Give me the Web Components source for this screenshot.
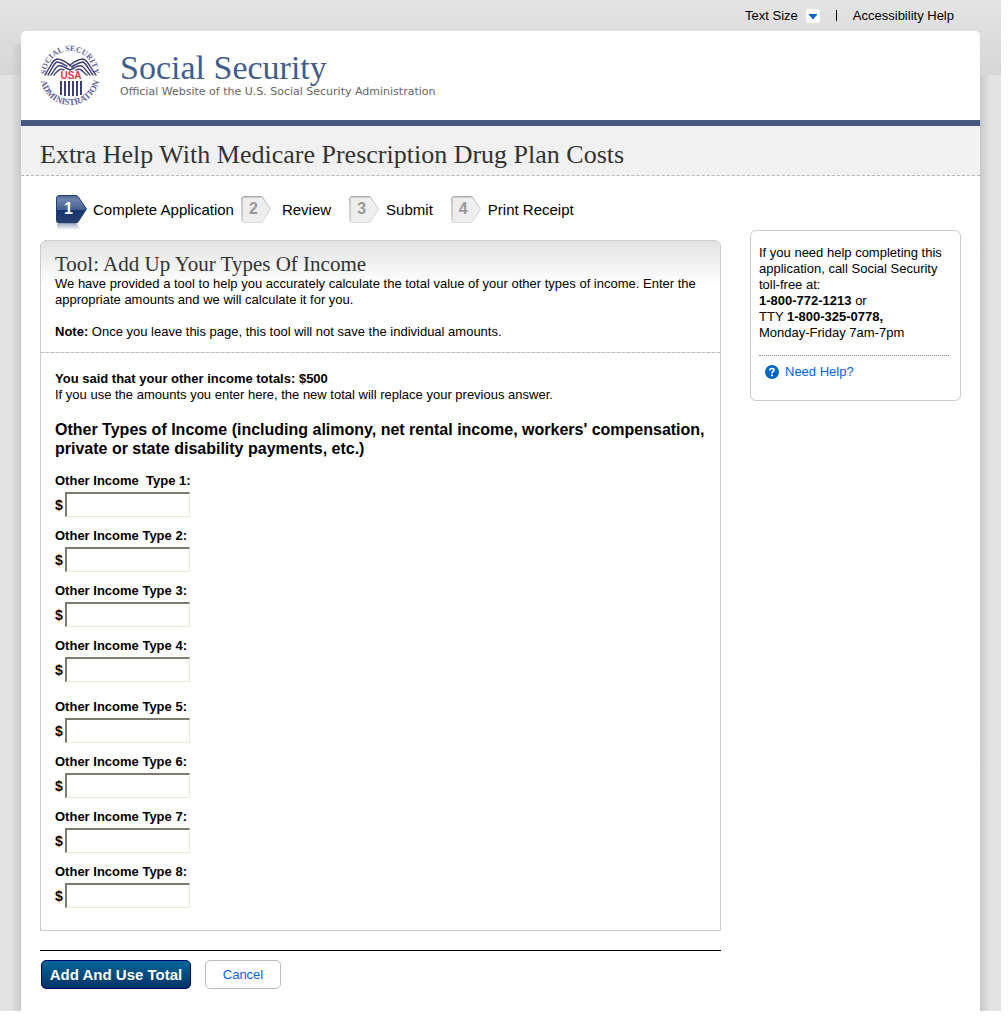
<!DOCTYPE html>
<html lang="en">
<head>
<meta charset="utf-8">
<title>Extra Help With Medicare Prescription Drug Plan Costs</title>
<style>
  body { margin: 0; background: #fff; color: #000; font: 13px/16px "Liberation Sans", Arial, sans-serif; }
</style>
</head>
<body>
<ssa-page>
  <ssa-utility slot="utility"></ssa-utility>
  <ssa-masthead></ssa-masthead>
  <ssa-title>Extra Help With Medicare Prescription Drug Plan Costs</ssa-title>
  <ssa-columns>
    <ssa-steps>
      <ssa-step number="1" current>Complete Application</ssa-step>
      <ssa-step number="2" class="wide">Review</ssa-step>
      <ssa-step number="3">Submit</ssa-step>
      <ssa-step number="4">Print Receipt</ssa-step>
    </ssa-steps>
    <ssa-income-tool></ssa-income-tool>
    <ssa-actions></ssa-actions>
    <ssa-help slot="side"></ssa-help>
  </ssa-columns>
</ssa-page>

<script>
function define(name, html) {
  const template = document.createElement('template');
  template.innerHTML = html;
  customElements.define(name, class extends HTMLElement {
    constructor() {
      super();
      this.attachShadow({ mode: 'open' }).append(template.content.cloneNode(true));
    }
  });
}

define('ssa-page', `
  <style>
    :host { display: block; margin: 0 7px 7px 0; background: linear-gradient(#e4e4e4, #d6d6d6) 0 0 / 100% 75px no-repeat #e3e3e3; }
    .frame { padding: 0 11px; }
    .edges { display: grid; grid-template-columns: 10px 1fr 10px; }
    .edge { margin-top: 44px; background: linear-gradient(to left, #e3e3e300, #c8c8c8); }
    .left { margin-top: 13px; background: linear-gradient(to right, #e3e3e300, #c8c8c8); }
    main { background: #fff; border-radius: 5px 5px 0 0; overflow: hidden; }
  </style>
  <div class="frame">
    <slot name="utility"></slot>
    <div class="edges"><div class="edge left"></div><main><slot></slot></main><div class="edge"></div></div>
  </div>`);

define('ssa-utility', `
  <style>
    :host { display: flex; height: 31px; align-items: center; justify-content: flex-end; padding-right: 36px; }
    button { display: flex; align-items: center; gap: 8px; padding: 0; border: 0; background: none; color: inherit; font: inherit; }
    a { color: inherit; text-decoration: none; }
    .bar { width: 1px; height: 11px; margin: 0 16px; background: #000; }
  </style>
  <button type="button">Text Size
    <svg width="14" height="14" viewBox="0 0 14 14" aria-hidden="true"><rect width="14" height="14" rx="3" fill="#fff"/><path d="M3 5h8v1l-3 3v1H6V9L3 6z" fill="#06c"/></svg>
  </button>
  <span class="bar"></span>
  <a href="#help">Accessibility Help</a>`);

define('ssa-seal', `
  <style>:host { display: block; width: 62px; height: 62px; } svg { display: block; overflow: visible; }</style>
  <svg width="62" height="62" viewBox="0 0 62 62" role="img" aria-label="Social Security Administration seal">
    <defs>
      <path id="top" d="M7 31A24 24 0 1 1 55 31"/>
      <path id="low" d="M1 31A30 30 0 0 0 61 31"/>
    </defs>
    <g fill="#66659a" font-family="Liberation Serif, serif" font-weight="bold" text-anchor="middle">
      <text font-size="8"><textPath href="#top" startOffset="50%">SOCIAL SECURITY</textPath></text>
      <text font-size="9"><textPath href="#low" startOffset="50%">ADMINISTRATION</textPath></text>
    </g>
    <g fill="none" stroke="#3d3d78" stroke-width="1.400" stroke-linecap="round">
      <path d="M31 21c-4-3-8-6-13-6-5 1-6 7-12 16"/>
      <path d="M28 22c-4-2-7-4-10-4-4 2-5 7-9 13"/>
      <path d="M27 24c-3-2-5-3-8-2-3 2-4 5-7 9"/>
      <path d="M25 26c-2-1-4-1-5 0-2 1-3 3-5 5"/>
      <path d="M31 21c4-3 8-6 13-6 5 1 6 7 13 16"/>
      <path d="M34 22c4-2 7-4 10-4 4 2 5 7 10 13"/>
      <path d="M35 24c3-2 5-3 8-2 3 2 4 5 8 9"/>
      <path d="M37 26c2-1 4-1 5 0 2 1 3 3 6 5"/>
      <path d="M29 20l4 3 2-2M27 24l4 2 4-2"/>
    </g>
    <path d="M22 37v14M26 37v15M30 37v15M34 37v15M38 37v15M42 37v14" stroke="#3d3d78" stroke-width="2"/>
    <text x="32" y="35" text-anchor="middle" fill="#e0393f" font-family="Liberation Sans, sans-serif" font-size="10" font-weight="bold">USA</text>
  </svg>`);

define('ssa-masthead', `
  <style>
    :host { display: flex; align-items: flex-start; gap: 19px; height: 76px; padding: 13px 18px 0; border-bottom: 6px solid #48597f; }
    .name { color: #425d8c; font: 34px/38px "Liberation Serif", serif; padding-top: 5px; }
    .tag { color: #666; font: 11px/14px "DejaVu Sans", sans-serif; margin-top: -2px; }
    p { margin: 0; }
  </style>
  <ssa-seal></ssa-seal>
  <div><p class="name">Social Security</p><p class="tag">Official Website of the U.S. Social Security Administration</p></div>`);

define('ssa-title', `
  <style>
    :host { display: block; background: #f1f1f1; border-bottom: 1px dashed #bbb; padding: 14px 19px 5px; }
    h1 { margin: 0; color: #333; font: 26px/30px "Liberation Serif", serif; }
  </style>
  <h1><slot></slot></h1>`);

define('ssa-columns', `
  <style>
    :host { display: grid; grid-template-columns: 1fr 211px; gap: 29px; align-items: start; padding: 0 19px 22px; }
    aside { padding-top: 54px; }
  </style>
  <div><slot></slot></div><aside><slot name="side"></slot></aside>`);

define('ssa-steps', `
  <style>
    :host { display: flex; gap: 18px; height: 45px; padding: 19px 0 0 16px; font-size: 15px; }
    ::slotted([current]) { margin-right: -11px; }
  </style>
  <slot></slot>`);

customElements.define('ssa-step', class extends HTMLElement {
  connectedCallback() {
    const current = this.hasAttribute('current');
    this.attachShadow({ mode: 'open' }).innerHTML = `
      <style>
        :host { display: flex; align-items: flex-start; gap: 7px; white-space: nowrap; }
        :host(.wide) { gap: 11px; }
        .marker { display: grid; width: 30px; }
        .marker > * { grid-area: 1 / 1; }
        b { width: 25px; text-align: center; font-size: 16px; line-height: 28px; color: ${current ? '#fff' : '#999'}; }
        .label { line-height: 30px; }
      </style>
      <span class="marker">
        <svg width="31" height="36" viewBox="0 0 31 36" aria-hidden="true">
          <defs>
            <linearGradient id="blue" x2="0" y2="1"><stop stop-color="#4b6796"/><stop offset=".15" stop-color="#6d82a9"/><stop offset=".52" stop-color="#435f90"/><stop offset=".54" stop-color="#15366c"/><stop offset="1" stop-color="#2a4170"/></linearGradient>
            <linearGradient id="fade" x2="0" y2="1"><stop stop-color="#a9b4c8"/><stop offset="1" stop-color="#fff"/></linearGradient>
            <linearGradient id="grey" x2="0" y2="1"><stop stop-color="#aaa"/><stop offset=".3" stop-color="#ccc"/><stop offset="1" stop-color="#ddd"/></linearGradient>
          </defs>
          ${current
            ? '<path d="M1 29h20l4 6H1z" fill="url(#fade)"/><path d="M3 .5h17q1 0 2 1l8.500 12.500L22 27q-1 1-2 1H3q-2.500 0-2.500-2.500v-22Q.5.5 3 .5z" fill="url(#blue)" stroke="#203e70"/>'
            : '<path d="M3 1.500h18l8.500 12.500L21 27.500H3q-2.500 0-2.500-2.500V4Q.5 1.500 3 1.500z" fill="#eee" stroke="url(#grey)"/><path d="M1.500 26V4q0-1.500 1.500-1.500h17" fill="none" stroke="#ccc"/>'}
        </svg>
        <b>${this.getAttribute('number')}</b>
      </span>
      <span class="label"><slot></slot></span>`;
  }
});

customElements.define('ssa-amount', class extends HTMLElement {
  connectedCallback() {
    this.attachShadow({ mode: 'open' }).innerHTML = `
      <style>
        :host { display: block; font-weight: bold; }
        label { display: block; white-space: pre; }
        .row { display: flex; align-items: center; gap: 2px; margin-top: 3px; }
        .sign { width: 8px; font-size: 14px; }
        input { box-sizing: border-box; width: 125px; height: 25px; margin: 0; padding: 2px 4px; background: #fff; border: solid; border-width: 2px 1px 1px 2px; border-color: #7d7a70 #ece9d8 #ece9d8 #7d7a70; font: inherit; }
      </style>
      <label for="amount">${this.getAttribute('label')}</label>
      <div class="row"><span class="sign">$</span><input id="amount" type="text"></div>`;
  }
});

define('ssa-income-tool', `
  <style>
    :host { display: block; border: 1px solid #ccc; border-radius: 6px 6px 0 0; overflow: hidden; }
    h2, h3, p { margin: 0; }
    header { padding: 11px 14px 12px; border-bottom: 1px dashed #bbb; background: linear-gradient(#e2e2e2, #fff 44px); }
    h2 { color: #333; font: 21px/24px "Liberation Serif", serif; }
    .note { margin-top: 16px; }
    section { padding: 18px 14px 22px; }
    h3 { margin: 17px 0 15px; font-size: 16px; line-height: 19px; }
    .group { display: grid; gap: 11px; }
    .group + .group { margin-top: 17px; }
  </style>
  <header>
    <h2>Tool: Add Up Your Types Of Income</h2>
    <p>We have provided a tool to help you accurately calculate the total value of your other types of income. Enter the appropriate amounts and we will calculate it for you.</p>
    <p class="note"><b>Note:</b> Once you leave this page, this tool will not save the individual amounts.</p>
  </header>
  <section>
    <p><b>You said that your other income totals: $500</b></p>
    <p>If you use the amounts you enter here, the new total will replace your previous answer.</p>
    <h3>Other Types of Income (including alimony, net rental income, workers' compensation, private or state disability payments, etc.)</h3>
    <div class="group">
      <ssa-amount label="Other Income  Type 1:"></ssa-amount>
      <ssa-amount label="Other Income Type 2:"></ssa-amount>
      <ssa-amount label="Other Income Type 3:"></ssa-amount>
      <ssa-amount label="Other Income Type 4:"></ssa-amount>
    </div>
    <div class="group">
      <ssa-amount label="Other Income Type 5:"></ssa-amount>
      <ssa-amount label="Other Income Type 6:"></ssa-amount>
      <ssa-amount label="Other Income Type 7:"></ssa-amount>
      <ssa-amount label="Other Income Type 8:"></ssa-amount>
    </div>
  </section>`);

define('ssa-actions', `
  <style>
    :host { display: flex; gap: 14px; margin-top: 19px; padding: 9px 1px 0; border-top: 1px solid #000; }
    button { height: 29px; padding: 0; border-radius: 5px; white-space: nowrap; }
    .primary { width: 150px; border: 1px solid #006; background: linear-gradient(#069, #036); color: #fff; font: bold 15px/20px "Liberation Sans", Arial, sans-serif; }
    .plain { width: 76px; border: 1px solid #bbb; background: #fff; color: #06d; font: inherit; }
  </style>
  <button type="button" class="primary">Add And Use Total</button>
  <button type="button" class="plain">Cancel</button>`);

define('ssa-help', `
  <style>
    :host { display: block; border: 1px solid #ccc; border-radius: 6px; padding: 14px 8px 20px; }
    p { margin: 0; }
    .link { display: flex; align-items: center; gap: 6px; margin: 14px 3px 0 0; padding: 8px 0 0 6px; border-top: 1px dotted #888; }
    a { color: #06d; text-decoration: none; }
  </style>
  <p>If you need help completing this application, call Social Security toll-free at:<br><b>1-800-772-1213</b> or<br>TTY <b>1-800-325-0778,</b><br>Monday-Friday 7am-7pm</p>
  <div class="link">
    <svg width="14" height="14" viewBox="0 0 14 14" aria-hidden="true"><circle cx="7" cy="7" r="7" fill="#06c"/><path d="M5 5.500V5q0-1.500 2-1.500T9 5q0 1-1 1.500T7 8.500" fill="none" stroke="#fff" stroke-width="1.700"/><path d="M6 9.500h2v1.700H6z" fill="#fff"/></svg>
    <a href="#need-help">Need Help?</a>
  </div>`);
</script>
</body>
</html>
